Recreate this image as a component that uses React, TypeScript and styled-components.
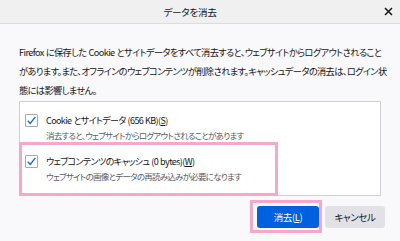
import styled, { createGlobalStyle } from 'styled-components';

const GlobalStyle = createGlobalStyle`
  html, body {
    margin: 0;
    padding: 0;
    background-color: #f9f9fb;
  }
  body {
    font-family: "Noto Sans CJK JP", "Noto Sans", sans-serif;
    color: #15141a;
  }
`;

const Dialog = styled.div`
  width: 400px;
  height: 241px;
  background-color: #f9f9fb;
  display: flex;
  flex-direction: column;
  font-feature-settings: "palt";
  letter-spacing: -0.6px;
  word-spacing: 0.5px;
`;

const TitleBar = styled.div`
  height: 23px;
  background-color: #f0f0f0;
  border-bottom: 1px solid #dcdcdc;
  display: flex;
  align-items: center;
  justify-content: center;
  padding-right: 20px;
  position: relative;
  font-size: 9.6px;
  letter-spacing: -0.3px;
`;

const CloseButton = styled.div`
  position: absolute;
  right: 7px;
  top: 6px;
  width: 10px;
  height: 10px;
  display: flex;
  align-items: center;
  justify-content: center;
`;

const Body = styled.div`
  padding: 19px 19px 0;
  display: flex;
  flex-direction: column;
`;

const Description = styled.p`
  margin: 0;
  font-size: 9.2px;
  line-height: 19px;
  white-space: nowrap;
`;

const ListBox = styled.div`
  margin-top: 1px;
  height: 93px;
  background-color: #fff;
  border: 1px solid #cfcfd8;
  display: flex;
  flex-direction: column;
`;

const Item = styled.div<{ $highlight?: boolean }>`
  display: flex;
  gap: 8px;
  ${(p) =>
    p.$highlight
      ? `
    width: 250px;
    height: 46px;
    margin: 0 0 -1px -1px;
    border: 3px solid #f4a9c9;
    padding: 10px 0 0 3px;
  `
      : `
    height: 29px;
    padding: 12px 0 0 5px;
  `}
`;

const CheckBox = styled.div`
  width: 11px;
  height: 11px;
  border: 1px solid #a9a9b6;
  border-radius: 1px;
  background-color: #fff;
  display: flex;
  align-items: center;
  justify-content: center;
  flex-shrink: 0;
`;

const ItemText = styled.div`
  display: flex;
  flex-direction: column;
  margin-top: -1px;
  white-space: nowrap;
`;

const ItemLabel = styled.div`
  font-size: 9px;
  line-height: 15px;
  letter-spacing: -0.6px;
`;

const ItemHint = styled.div`
  font-size: 8.5px;
  line-height: 14px;
  letter-spacing: -0.75px;
  color: #5b5b66;
`;

const Footer = styled.div`
  display: flex;
  justify-content: flex-end;
  align-items: center;
  padding-top: 4px;
  margin-right: -4px;
  gap: 3px;
`;

const Highlight = styled.div`
  border: 3px solid #f4a9c9;
  padding: 3px 0 2px 4px;
  display: flex;
`;

const Button = styled.button<{ $primary?: boolean }>`
  width: ${(p) => (p.$primary ? '62px' : '60px')};
  height: 22px;
  border: none;
  border-radius: 3px;
  font-family: "Noto Sans CJK JP", "Noto Sans", sans-serif;
  font-size: 9.5px;
  font-feature-settings: "palt";
  letter-spacing: -0.4px;
  padding: 0;
  color: ${(p) => (p.$primary ? '#fff' : '#15141a')};
  background-color: ${(p) => (p.$primary ? '#0061e0' : '#e2e2e6')};
`;

const Check = () => (
  <svg width="11" height="11" viewBox="0 0 11 11">
    <path d="M1.8 5.8 L4.2 8.4 L9.4 1.8" fill="none" stroke="#0a68d9" strokeWidth="1.3" />
  </svg>
);

const App = () => {
  return (
    <>
      <GlobalStyle />
      <Dialog>
        <TitleBar>
          データを消去
          <CloseButton>
            <svg width="9" height="9" viewBox="0 0 9 9">
              <path d="M1 1 L8 8 M8 1 L1 8" stroke="#15141a" strokeWidth="1.5" />
            </svg>
          </CloseButton>
        </TitleBar>
        <Body>
          <Description>
            Firefox に保存した Cookie とサイトデータをすべて消去すると、ウェブサイトからログアウトされること
            <br />
            があります。また、オフラインのウェブコンテンツが削除されます。キャッシュデータの消去は、ログイン状
            <br />
            態には影響しません。
          </Description>
          <ListBox>
            <Item>
              <CheckBox>
                <Check />
              </CheckBox>
              <ItemText>
                <ItemLabel>
                  Cookie とサイトデータ (656 KB)(<u>S</u>)
                </ItemLabel>
                <ItemHint>消去すると、ウェブサイトからログアウトされることがあります</ItemHint>
              </ItemText>
            </Item>
            <Item $highlight>
              <CheckBox>
                <Check />
              </CheckBox>
              <ItemText>
                <ItemLabel>
                  ウェブコンテンツのキャッシュ (0 bytes)(<u>W</u>)
                </ItemLabel>
                <ItemHint>ウェブサイトの画像とデータの再読み込みが必要になります</ItemHint>
              </ItemText>
            </Item>
          </ListBox>
          <Footer>
            <Highlight>
              <Button $primary>
                消去(<u>L</u>)
              </Button>
            </Highlight>
            <Button>キャンセル</Button>
          </Footer>
        </Body>
      </Dialog>
    </>
  );
};

export default App;
